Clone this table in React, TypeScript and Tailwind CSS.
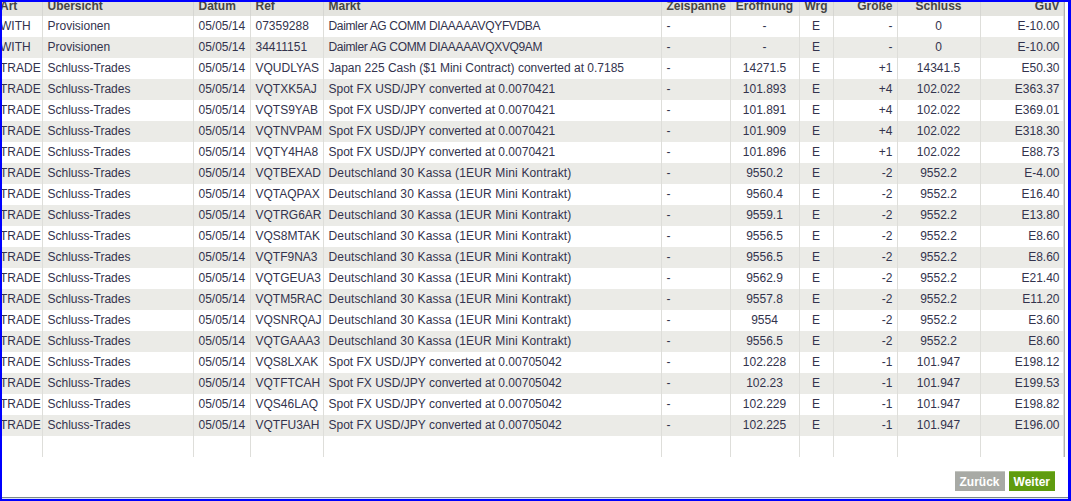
import React from "react";

type Row = [string, string, string, string, string, string, string, string, string, string, string];

const SPOT1 = "Spot FX USD/JPY converted at 0.0070421";
const DAX = "Deutschland 30 Kassa (1EUR Mini Kontrakt)";
const SPOT2 = "Spot FX USD/JPY converted at 0.00705042";
const D = "05/05/14";

const rows: Row[] = [
  ["WITH", "Provisionen", D, "07359288", "Daimler AG COMM DIAAAAAVQYFVDBA", "-", "-", "E", "-", "0", "E-10.00"],
  ["WITH", "Provisionen", D, "34411151", "Daimler AG COMM DIAAAAAVQXVQ9AM", "-", "-", "E", "-", "0", "E-10.00"],
  ["TRADE", "Schluss-Trades", D, "VQUDLYAS", "Japan 225 Cash ($1 Mini Contract) converted at 0.7185", "-", "14271.5", "E", "+1", "14341.5", "E50.30"],
  ["TRADE", "Schluss-Trades", D, "VQTXK5AJ", SPOT1, "-", "101.893", "E", "+4", "102.022", "E363.37"],
  ["TRADE", "Schluss-Trades", D, "VQTS9YAB", SPOT1, "-", "101.891", "E", "+4", "102.022", "E369.01"],
  ["TRADE", "Schluss-Trades", D, "VQTNVPAM", SPOT1, "-", "101.909", "E", "+4", "102.022", "E318.30"],
  ["TRADE", "Schluss-Trades", D, "VQTY4HA8", SPOT1, "-", "101.896", "E", "+1", "102.022", "E88.73"],
  ["TRADE", "Schluss-Trades", D, "VQTBEXAD", DAX, "-", "9550.2", "E", "-2", "9552.2", "E-4.00"],
  ["TRADE", "Schluss-Trades", D, "VQTAQPAX", DAX, "-", "9560.4", "E", "-2", "9552.2", "E16.40"],
  ["TRADE", "Schluss-Trades", D, "VQTRG6AR", DAX, "-", "9559.1", "E", "-2", "9552.2", "E13.80"],
  ["TRADE", "Schluss-Trades", D, "VQS8MTAK", DAX, "-", "9556.5", "E", "-2", "9552.2", "E8.60"],
  ["TRADE", "Schluss-Trades", D, "VQTF9NA3", DAX, "-", "9556.5", "E", "-2", "9552.2", "E8.60"],
  ["TRADE", "Schluss-Trades", D, "VQTGEUA3", DAX, "-", "9562.9", "E", "-2", "9552.2", "E21.40"],
  ["TRADE", "Schluss-Trades", D, "VQTM5RAC", DAX, "-", "9557.8", "E", "-2", "9552.2", "E11.20"],
  ["TRADE", "Schluss-Trades", D, "VQSNRQAJ", DAX, "-", "9554", "E", "-2", "9552.2", "E3.60"],
  ["TRADE", "Schluss-Trades", D, "VQTGAAA3", DAX, "-", "9556.5", "E", "-2", "9552.2", "E8.60"],
  ["TRADE", "Schluss-Trades", D, "VQS8LXAK", SPOT2, "-", "102.228", "E", "-1", "101.947", "E198.12"],
  ["TRADE", "Schluss-Trades", D, "VQTFTCAH", SPOT2, "-", "102.23", "E", "-1", "101.947", "E199.53"],
  ["TRADE", "Schluss-Trades", D, "VQS46LAQ", SPOT2, "-", "102.229", "E", "-1", "101.947", "E198.82"],
  ["TRADE", "Schluss-Trades", D, "VQTFU3AH", SPOT2, "-", "102.225", "E", "-1", "101.947", "E196.00"],
];

const widths = [47, 151, 57, 73, 338, 69, 69, 34, 64, 83, 83];
const headers = ["Art", "Übersicht", "Datum", "Ref", "Markt", "Zeispanne", "Eröffnung", "Wrg", "Größe", "Schluss", "GuV"];

const align = [
  "text-left pl-[5px]",
  "text-left pl-[5px]",
  "text-left pl-[5px]",
  "text-left pl-[5px]",
  "text-left pl-[5px]",
  "text-left pl-[5px]",
  "text-center",
  "text-center",
  "text-right pr-[4px]",
  "text-center",
  "text-right pr-[3px]",
];

function tracking(text: string, ci: number) {
  if (ci !== 4) return "";
  if (text.startsWith("Daimler")) return "tracking-[-0.35px]";
  if (text.startsWith("Deutschland")) return "tracking-[0.15px]";
  return "";
}

export default function App() {
  return (
    <div className="w-[1071px] h-[501px] overflow-hidden bg-white border-l-2 border-t-2 border-r-[3px] border-b-2 border-[#0000ff] flex flex-col font-['Liberation_Sans',Arial,sans-serif] text-[12px]">
      <div className="flex-1 overflow-hidden">
        <div className="-mt-[2px] -ml-[7px] w-[1070px] border-r-2 border-[#b0b0b0]">
          <table className="table-fixed border-collapse w-[1068px]">
            <colgroup>
              {widths.map((w, i) => (
                <col key={i} style={{ width: w }} />
              ))}
            </colgroup>
            <thead>
              <tr className="bg-[#e4e4df] h-[16px]">
                {headers.map((h, i) => (
                  <th
                    key={i}
                    className={`${align[i]} align-top p-0 h-[16px] leading-[12px] font-bold text-[#454545] whitespace-nowrap overflow-hidden border-r border-[#d6d6d2] ${i === 0 ? "pl-[5px]" : ""}`}
                  >
                    {h}
                  </th>
                ))}
              </tr>
            </thead>
            <tbody>
              {rows.map((r, ri) => (
                <tr key={ri} className={ri % 2 === 1 ? "bg-[#ebebe7]" : "bg-white"}>
                  {r.map((c, ci) => (
                    <td
                      key={ci}
                      className={`${align[ci]} ${tracking(c, ci)} p-0 ${ci === 0 ? "pl-[5px]" : ""} h-[21px] leading-[21px] text-[#33334d] whitespace-nowrap overflow-hidden border-r border-[#dededa]`}
                    >
                      {c}
                    </td>
                  ))}
                </tr>
              ))}
              <tr className="bg-white">
                {widths.map((_, i) => (
                  <td key={i} className="p-0 h-[21px] border-r border-[#dededa]"></td>
                ))}
              </tr>
            </tbody>
          </table>
        </div>
        <div className="flex justify-end gap-[4px] pt-[14px] pr-[13px]">
          <button className="h-[20px] px-[5px] bg-[#a8aaa5] border-t border-[#c4c6c1] text-white font-bold text-[12px] leading-[18px]">
            Zurück
          </button>
          <button className="h-[20px] px-[5px] bg-[#5f9c0f] border-t border-[#86bd3d] text-white font-bold text-[12px] leading-[18px]">
            Weiter
          </button>
        </div>
      </div>
      <div className="h-px bg-[#7b8a8a]"></div>
      <div className="h-px bg-[#dce4f2]"></div>
    </div>
  );
}
